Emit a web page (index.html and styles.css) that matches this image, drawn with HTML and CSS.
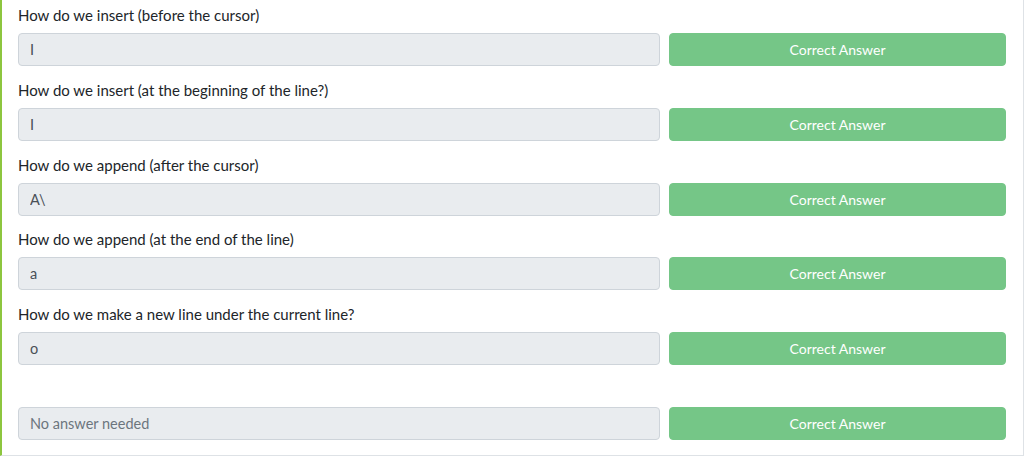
FILE: index.html
```html
<!DOCTYPE html>
<html lang="en">
<head>
    <meta charset="UTF-8">
    <meta name="viewport" content="width=device-width, initial-scale=1.0">
    <title>Task Questions</title>
    <link rel="stylesheet" href="styles.css">
</head>
<body>

    <div class="task-card">
        <div class="question">
            <label class="question-text">How do we insert (before the cursor)</label>
            <div class="answer-row">
                <input class="answer" type="text" value="I" readonly>
                <button class="btn-correct">Correct Answer</button>
            </div>
        </div>
        <div class="question">
            <label class="question-text">How do we insert (at the beginning of the line?)</label>
            <div class="answer-row">
                <input class="answer" type="text" value="I" readonly>
                <button class="btn-correct">Correct Answer</button>
            </div>
        </div>
        <div class="question">
            <label class="question-text">How do we append (after the cursor)</label>
            <div class="answer-row">
                <input class="answer" type="text" value="A\" readonly>
                <button class="btn-correct">Correct Answer</button>
            </div>
        </div>
        <div class="question">
            <label class="question-text">How do we append (at the end of the line)</label>
            <div class="answer-row">
                <input class="answer" type="text" value="a" readonly>
                <button class="btn-correct">Correct Answer</button>
            </div>
        </div>
        <div class="question">
            <label class="question-text">How do we make a new line under the current line?</label>
            <div class="answer-row">
                <input class="answer" type="text" value="o" readonly>
                <button class="btn-correct">Correct Answer</button>
            </div>
        </div>
        <div class="question">
            <label class="question-text"></label>
            <div class="answer-row">
                <input class="answer" type="text" placeholder="No answer needed" readonly>
                <button class="btn-correct">Correct Answer</button>
            </div>
        </div>
    </div>

</body>
</html>
```

FILE: styles.css
```css
/* Task card with question rows */
body {
    margin: 0;
    background: #ffffff;
    font-family: Lato, "Open Sans", sans-serif;
}

.task-card {
    border-left: 2px solid #8dc63f;
    border-right: 1px solid #dee2e6;
    border-bottom: 1px solid #dee2e6;
    padding: 5px 17px 1px 16px;
    height: 456px;
    box-sizing: border-box;
}

.question {
    margin-bottom: 13.8px;
}

.question-text {
    display: block;
    height: 20px;
    line-height: 20px;
    font-size: 15px;
    color: #212529;
    margin-bottom: 8px;
}

.answer-row {
    display: flex;
    gap: 9px;
}

.answer {
    flex: 1;
    height: 33px;
    box-sizing: border-box;
    padding: 0 11px;
    background: #e9ecef;
    border: 1px solid #ced4da;
    border-radius: 4px;
    font-family: inherit;
    font-size: 14.5px;
    color: #495057;
    outline: none;
}

.answer::placeholder {
    color: #6c757d;
}

.btn-correct {
    width: 337px;
    height: 33px;
    background: #75c687;
    border: 1px solid #75c687;
    border-radius: 4px;
    color: #ffffff;
    font-family: inherit;
    font-size: 14px;
}
```
